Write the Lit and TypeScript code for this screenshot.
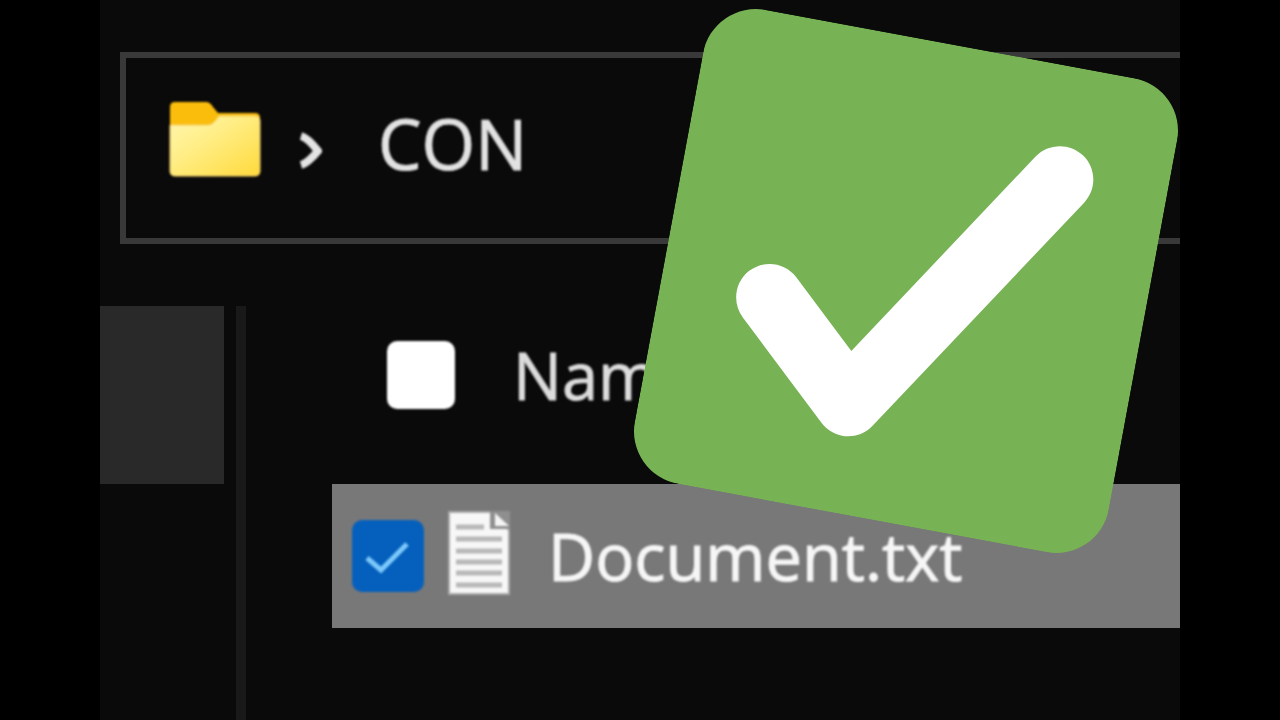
import { LitElement, html, css } from "lit";
import { customElement } from "lit/decorators.js";

@customElement("app-root")
export class AppRoot extends LitElement {
  static styles = css`
    :host {
      display: block;
      min-height: 100vh;
      background: #000;
      color: #ececec;
      font-family: "Open Sans", "Noto Sans", sans-serif;
      font-size: 65px;
      line-height: 72px;
      -webkit-text-stroke: 1px currentColor;
    }
    * {
      box-sizing: border-box;
    }
    .stage {
      position: relative;
      display: flex;
      flex-direction: column;
      gap: 62px;
      min-height: 100vh;
      margin: 0 100px;
      padding-top: 52px;
      background: #0a0a0a;
      overflow: hidden;
    }
    .address {
      display: flex;
      align-items: center;
      height: 192px;
      margin-left: 20px;
      padding: 0 0 10px 42px;
      border: 6px solid #393939;
      border-right: 0;
    }
    .soft {
      filter: blur(1px);
    }
    .folder {
      width: 94px;
      height: 78px;
      margin-bottom: 8px;
    }
    .chevron {
      width: 30px;
      height: 40px;
      margin: 16px 50px 0 36px;
    }
    .crumb {
      color: #e2e2e2;
      font-size: 69px;
      text-decoration: none;
    }
    .body {
      display: flex;
      flex: 1;
    }
    .side {
      width: 136px;
    }
    .place {
      display: block;
      width: 124px;
      height: 178px;
      padding: 0;
      border: 0;
      background: #292929;
    }
    .divider {
      width: 10px;
      background: #191919;
    }
    .files {
      display: block;
      flex: 1;
      margin-left: 86px;
    }
    .files thead,
    .files tbody {
      display: block;
    }
    .row {
      display: flex;
      align-items: center;
    }
    .row > * {
      display: flex;
      align-items: center;
      padding: 0;
      font-weight: 400;
    }
    .head {
      height: 178px;
      padding: 0 0 40px 55px;
      gap: 58px;
      color: #dcdcdc;
    }
    .item {
      height: 144px;
      padding-left: 20px;
      gap: 20px;
      background: #787878;
      color: #f6f6f6;
    }
    .box {
      position: relative;
      display: block;
    }
    .tick {
      appearance: none;
      display: block;
      width: 68px;
      height: 68px;
      margin: 0;
      border-radius: 10px;
      background: #fff;
    }
    .tick:checked {
      width: 72px;
      height: 72px;
      background: #0560bd;
    }
    .mark {
      position: absolute;
      inset: 0;
      pointer-events: none;
    }
    .name {
      gap: 34px;
    }
    .doc {
      width: 70px;
      height: 88px;
      margin-bottom: 6px;
    }
    .badge {
      position: absolute;
      top: 40px;
      right: 33px;
      width: 482px;
      height: 482px;
      transform: rotate(10.5deg);
    }
  `;

  render() {
    return html`
      <main class="stage">
        <nav class="address" aria-label="Address">
          <svg class="folder soft" viewBox="0 0 94 78" aria-hidden="true">
            <defs>
              <linearGradient id="f" x1="0" y1="0" x2="1" y2="1">
                <stop offset="0" stop-color="#fff6b0" />
                <stop offset="0.4" stop-color="#ffee86" />
                <stop offset="1" stop-color="#ffda3c" />
              </linearGradient>
            </defs>
            <path d="M2 7q0-5 5-5h31q4 0 7 5l5 6h37q5 0 5 5v20H2z" fill="#fbbd0c" />
            <path d="M2 25h38q4 0 7-4l4-5h36q5 0 5 5v50q0 5-5 5H7q-5 0-5-5z" fill="url(#f)" stroke="#f2cf6a" stroke-width="1" />
          </svg>
          <svg class="chevron soft" viewBox="0 0 30 40" fill="none" stroke="#e4e4e4" stroke-width="8" aria-hidden="true">
            <path d="M3 5q7 2 17 15Q10 32 3 34" stroke-linejoin="round" />
          </svg>
          <a class="crumb soft" href="#">CON</a>
        </nav>
        <div class="body">
          <aside class="side"><button class="place" aria-label="Folder"></button></aside>
          <div class="divider"></div>
          <table class="files">
            <thead>
              <tr class="row head">
                <th><input class="tick soft" type="checkbox" aria-label="Select all" /></th>
                <th class="soft">Name</th>
              </tr>
            </thead>
            <tbody>
              <tr class="row item">
                <td>
                  <label class="box">
                    <input class="tick soft" type="checkbox" checked aria-label="Select Document.txt" />
                    <svg class="mark soft" viewBox="0 0 72 72" fill="none" stroke="#7cc8fa" stroke-width="5" aria-hidden="true">
                      <path d="M15 38l14 12 26-26" />
                    </svg>
                  </label>
                </td>
                <td class="name">
                  <svg class="doc soft" viewBox="0 0 70 88" aria-hidden="true">
                    <path d="M5 3h42l18 18v64H5z" fill="#f7f7f7" stroke="#a9a9a9" stroke-width="2" />
                    <path d="M46 2h20v18H46z" fill="#8f8f8f" />
                    <path d="M51 4l14 13H51z" fill="#f4f4f4" />
                    <path d="M12 18h28M12 30h46M12 42h46M12 53h46M12 64h46M12 76h46" stroke="#b8b8b8" stroke-width="5" />
                  </svg>
                  <span class="soft">Document.txt</span>
                </td>
              </tr>
            </tbody>
          </table>
        </div>
        <svg class="badge" viewBox="0 0 36 36" role="img" aria-label="Done">
          <rect width="36" height="36" rx="4" fill="#77b255" />
          <path
            fill="#fff"
            d="M29.28 6.362c-1.156-.751-2.704-.422-3.458.736L14.936 23.877l-5.029-4.65c-1.014-.938-2.596-.875-3.533.138-.937 1.014-.875 2.596.139 3.533l7.209 6.666c.48.445 1.09.665 1.696.665.673 0 1.534-.282 2.099-1.139L30.016 9.82c.75-1.158.422-2.706-.736-3.458z"
          />
        </svg>
      </main>
    `;
  }
}
